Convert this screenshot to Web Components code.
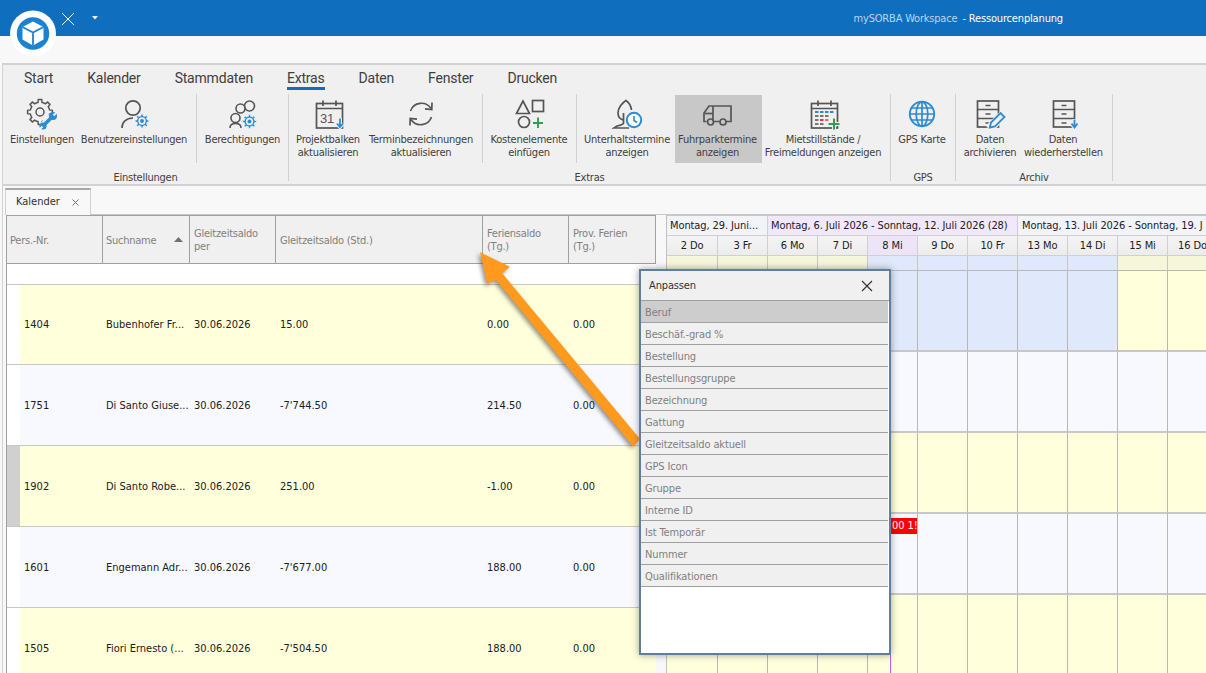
<!DOCTYPE html>
<html lang="de"><head><meta charset="utf-8"><title>mySORBA Workspace - Ressourcenplanung</title>
<style>
html,body{margin:0;height:100%;overflow:hidden;background:#f8f8f8}
body{font-family:"DejaVu Sans",sans-serif;font-stretch:condensed;font-size:11px;color:#303030}
</style></head><body>
<x-app>
  <x-titlebar slot="title"></x-titlebar>
  <x-ribbon>
    <x-ribbon-group label="Einstellungen" w="286" pad="5">
      <x-ribbon-button w="68" icon="gearWrench">Einstellungen</x-ribbon-button>
      <x-ribbon-button w="116" icon="userGear">Benutzereinstellungen</x-ribbon-button>
      <x-ribbon-sep gap="4"></x-ribbon-sep>
      <x-ribbon-button w="91" icon="usersGear">Berechtigungen</x-ribbon-button>
    </x-ribbon-group>
    <x-ribbon-group label="Extras" w="602">
      <x-ribbon-button w="76" icon="cal31" pl="2">Projektbalken<br>aktualisieren</x-ribbon-button>
      <x-ribbon-button w="112" icon="refresh">Terminbezeichnungen<br>aktualisieren</x-ribbon-button>
      <x-ribbon-sep gap="5"></x-ribbon-sep>
      <x-ribbon-button w="90" icon="shapes" pl="2">Kostenelemente<br>einfügen</x-ribbon-button>
      <x-ribbon-sep gap="3"></x-ribbon-sep>
      <x-ribbon-button w="98" icon="tree" pl="2">Unterhaltstermine<br>anzeigen</x-ribbon-button>
      <x-ribbon-button w="87" icon="truck" active pr="2">Fuhrparktermine<br>anzeigen</x-ribbon-button>
      <x-ribbon-button w="122" icon="calPlus">Mietstillstände /<br>Freimeldungen anzeigen</x-ribbon-button>
    </x-ribbon-group>
    <x-ribbon-group label="GPS" w="65">
      <x-ribbon-button w="64" icon="globe" pr="2">GPS Karte</x-ribbon-button>
    </x-ribbon-group>
    <x-ribbon-group label="Archiv" w="157">
      <x-ribbon-button w="68" icon="cabPen">Daten<br>archivieren</x-ribbon-button>
      <x-ribbon-button w="78" icon="cabDown">Daten<br>wiederherstellen</x-ribbon-button>
    </x-ribbon-group>
  </x-ribbon>
  <x-workspace>
    <x-doc-tab>Kalender</x-doc-tab>
    <x-grid-view></x-grid-view>
    <x-scheduler></x-scheduler>
  </x-workspace>
  <x-callout-arrow></x-callout-arrow>
  <x-customize-dialog>
    <x-customize-item active>Beruf</x-customize-item>
    <x-customize-item>Beschäf.-grad %</x-customize-item>
    <x-customize-item>Bestellung</x-customize-item>
    <x-customize-item>Bestellungsgruppe</x-customize-item>
    <x-customize-item>Bezeichnung</x-customize-item>
    <x-customize-item>Gattung</x-customize-item>
    <x-customize-item>Gleitzeitsaldo aktuell</x-customize-item>
    <x-customize-item>GPS Icon</x-customize-item>
    <x-customize-item>Gruppe</x-customize-item>
    <x-customize-item>Interne ID</x-customize-item>
    <x-customize-item>Ist Temporär</x-customize-item>
    <x-customize-item>Nummer</x-customize-item>
    <x-customize-item>Qualifikationen</x-customize-item>
  </x-customize-dialog>
</x-app>
<script>
function gearPath(cx,cy,ro,ri,n){
  let d='';const st=Math.PI*2/n;
  for(let i=0;i<n;i++){const a=i*st-Math.PI/2;
    const p=[[ri,a-st*.5],[ri,a-st*.27],[ro,a-st*.17],[ro,a+st*.17],[ri,a+st*.27]];
    p.forEach((q,j)=>{d+=(i===0&&j===0?'M':'L')+(cx+q[0]*Math.cos(q[1])).toFixed(2)+' '+(cy+q[0]*Math.sin(q[1])).toFixed(2)+' ';});
  }
  return d+'Z';
}
const G='#555',B='#2b8bd3',GR='#2f9e4f',BG='#f0f0f0';
function blueGear(x,y,r){return `<path d="${gearPath(x,y,r,r*.76,8)}" fill="${B}" stroke="${BG}" stroke-width=".8"/><circle cx="${x}" cy="${y}" r="${r*.52}" fill="${BG}"/><circle cx="${x}" cy="${y}" r="${r*.28}" fill="${B}"/>`;}
function calBase(){return `<rect x="4.5" y="5.5" width="26" height="24.5" fill="none" stroke="${G}" stroke-width="1.7"/><path d="M4.5 10.5H30.5M11 2.5V8M24 2.5V8" stroke="${G}" stroke-width="1.7" fill="none"/>`;}
function cabinet(x){return `<rect x="${x}" y="3" width="21" height="26" fill="none" stroke="${G}" stroke-width="1.7"/><path d="M${x} 11.5H${x+21}M${x} 20.5H${x+21}M${x+8} 7.5H${x+13}M${x+8} 16H${x+13}M${x+8} 25H${x+13}" stroke="${G}" stroke-width="1.5" fill="none"/>`;}
const ICONS={
 gearWrench:`<path d="${gearPath(14,14,12.5,9.8,8)}" fill="none" stroke="${G}" stroke-width="1.5"/><circle cx="14" cy="14" r="4" fill="none" stroke="${G}" stroke-width="1.5"/><path d="M17 28L27 18" stroke="${BG}" stroke-width="8"/><path d="M17.5 27.5L26.5 18.5" stroke="${B}" stroke-width="3.6"/><circle cx="27" cy="18" r="4" fill="${B}"/><circle cx="17" cy="28" r="3.6" fill="${B}"/><path d="M27.5 17.5L31 14M16.5 28.5L14 31" stroke="${BG}" stroke-width="2"/>`,
 userGear:`<circle cx="15" cy="10" r="7.2" fill="none" stroke="${G}" stroke-width="1.7"/><path d="M4 30C4 24 8 20.5 15 20" fill="none" stroke="${G}" stroke-width="1.7"/>${blueGear(24,23,7)}`,
 usersGear:`<circle cx="22.5" cy="8" r="5" fill="none" stroke="${G}" stroke-width="1.6"/><circle cx="13.5" cy="10.5" r="4.5" fill="${BG}" stroke="${G}" stroke-width="1.6"/><circle cx="8.5" cy="20" r="4.5" fill="${BG}" stroke="${G}" stroke-width="1.6"/><path d="M3 30C3 27 5 25.5 8.5 25.5C12 25.5 14 27 14 30" fill="none" stroke="${G}" stroke-width="1.6"/>${blueGear(22.5,23.5,7)}`,
 cal31:`${calBase()}<text x="15" y="25" font-family="Liberation Sans" font-size="13" fill="${G}" text-anchor="middle">31</text><path d="M28 20V28.5M25 25.5L28 29L31 25.5" stroke="${BG}" stroke-width="4" fill="none"/><path d="M28 20.5V28.5M25 25.5L28 29L31 25.5" stroke="${B}" stroke-width="1.8" fill="none"/>`,
 refresh:`<path d="M5.5 13A11.5 11.5 0 0 1 26 10.5M26.5 19A11.5 11.5 0 0 1 6 21.5" fill="none" stroke="${G}" stroke-width="1.7"/><path d="M27 4.5L26.8 11.5L20 10.8M5 27.5L5.2 20.5L12 21.2" fill="none" stroke="${G}" stroke-width="1.7"/>`,
 shapes:`<path d="M10 3L3.5 15.5H16.5Z" fill="none" stroke="${G}" stroke-width="1.7"/><rect x="19.5" y="2.5" width="11" height="11" fill="none" stroke="${G}" stroke-width="1.7"/><circle cx="11" cy="24" r="5.5" fill="none" stroke="${G}" stroke-width="1.7"/><path d="M25 19.5V30M20 25H30" stroke="${GR}" stroke-width="1.9"/>`,
 tree:`<path d="M12 22C9 21 7 19 7 15C7 10 11 5 15 2.5C18 4.5 20 8 20.5 12" fill="none" stroke="${G}" stroke-width="1.7"/><path d="M12.5 15V25C12.5 27 9 27 6 28L3 30H18" fill="none" stroke="${G}" stroke-width="1.7"/><circle cx="23" cy="22" r="7.2" fill="#fff" stroke="${B}" stroke-width="2"/><path d="M23 18V22.5L26 24.5" fill="none" stroke="${B}" stroke-width="1.6"/>`,
 truck:`<path d="M11 8H29V23.5H24M17.5 23.5H12M4.5 23.5H2V15L7 8H11V23" fill="none" stroke="${G}" stroke-width="1.7"/><path d="M2.5 15.5H11" stroke="${G}" stroke-width="1.7"/><circle cx="8.5" cy="24" r="3" fill="none" stroke="${G}" stroke-width="1.7"/><circle cx="21" cy="24" r="3" fill="none" stroke="${G}" stroke-width="1.7"/>`,
 calPlus:`${calBase()}<g fill="${B}"><rect x="8" y="13" width="3.5" height="2"/><rect x="13" y="13" width="3.5" height="2"/><rect x="18" y="13" width="3.5" height="2"/><rect x="23" y="13" width="3.5" height="2"/></g><g fill="#777"><rect x="8" y="17" width="3.5" height="2"/><rect x="13" y="17" width="3.5" height="2"/><rect x="18" y="17" width="3.5" height="2"/><rect x="8" y="21" width="3.5" height="2"/><rect x="8" y="25" width="3.5" height="2"/><rect x="13" y="25" width="3.5" height="2"/></g><rect x="13" y="21" width="3.5" height="2" fill="#e53935"/><rect x="18" y="21" width="3.5" height="2" fill="#e57373"/><path d="M27 20V32M21 26H33" stroke="${BG}" stroke-width="4"/><path d="M27 20.5V31.5M21.5 26H32.5" stroke="${GR}" stroke-width="2"/>`,
 globe:`<circle cx="16" cy="16" r="12.2" fill="none" stroke="${B}" stroke-width="1.9"/><ellipse cx="16" cy="16" rx="5.8" ry="12.2" fill="none" stroke="${B}" stroke-width="1.7"/><path d="M16 4V28M4 16H28M5.5 10H26.5M5.5 22H26.5" stroke="${B}" stroke-width="1.7"/>`,
 cabPen:`${cabinet(3.5)}<path d="M15 31L30 16" stroke="${BG}" stroke-width="9"/><path d="M15.8 29.5L17 24.5L26.5 15L30.5 19L21 28.5Z" fill="${BG}" stroke="${B}" stroke-width="1.8"/>`,
 cabDown:`${cabinet(6.5)}<path d="M27.5 21V29M24.5 25.5L27.5 29.5L30.5 25.5" stroke="${BG}" stroke-width="4" fill="none"/><path d="M27.5 21.5V29M24.5 25.5L27.5 29.5L30.5 25.5" stroke="${B}" stroke-width="1.8" fill="none"/>`
};
function def(name,css,html,setup){
  customElements.define(name,class extends HTMLElement{
    connectedCallback(){
      if(this.shadowRoot)return;
      const r=this.attachShadow({mode:'open'});
      const h=typeof html==='function'?html(this):html;
      r.innerHTML=`<style>${typeof css==='function'?css(this):css}</style>${h}`;
      if(setup)setup(this,r);
    }
  });
}
def('x-app',`:host{display:flex;flex-direction:column;position:relative;width:1206px;height:673px;overflow:hidden}`,`<slot name="title"></slot><slot></slot>`);

def('x-titlebar',`:host{display:flex;flex:none;align-items:center;justify-content:flex-end;height:36px;background:#106ebe;color:#fff;padding-right:143px;box-sizing:border-box;position:relative;margin-bottom:27px;letter-spacing:-.16px}
.t{color:#b9d5f0;margin-right:5px;letter-spacing:-.2px}
.logo{position:absolute;left:10px;top:10px;width:46px;height:46px}
.x{position:absolute;left:61px;top:12px}.d{position:absolute;left:92px;top:16px}`,
`<svg class="logo" viewBox="0 0 46 46"><circle cx="23" cy="23.5" r="23" fill="#fff"/><circle cx="23" cy="23.5" r="16.2" fill="#1b82d0"/><path d="M23 11.5L33.5 17V29.5L23 35.5L12.5 29.5V17Z" fill="#fff"/><path d="M12.5 17L23 22.5L33.5 17M23 22.5V35.5" fill="none" stroke="#1b82d0" stroke-width="1.8"/></svg>
<svg class="x" width="14" height="14" viewBox="0 0 14 14"><path d="M1 1L13 13M13 1L1 13" stroke="#fff" stroke-width="1"/></svg>
<svg class="d" width="6" height="4" viewBox="0 0 6 4"><path d="M0 0H6L3 3.5Z" fill="#fff"/></svg>
<span class="t">mySORBA Workspace</span><span>- Ressourcenplanung</span>`);

def('x-ribbon',`:host{display:flex;flex-direction:column;flex:none;height:123px;margin-left:2px;box-sizing:border-box;border:solid #d2d2d2;border-width:2px 0 2px 1px;background:#f0f0f0}
.tabs{display:flex;gap:34px;height:29px;padding:0 0 0 21px;flex:none;font:14px Roboto,sans-serif;letter-spacing:-.2px;color:#404040;font-stretch:normal}
.tabs span{height:22px;line-height:26px;box-sizing:content-box}
.on{border-bottom:3px solid #106ebe}
.g{display:flex;height:87px}`,
`<div class="tabs"><span>Start</span><span>Kalender</span><span>Stammdaten</span><span class="on">Extras</span><span>Daten</span><span>Fenster</span><span>Drucken</span></div><div class="g"><slot></slot></div>`);

def('x-ribbon-group',t=>`:host{display:flex;flex-direction:column;flex:none;box-sizing:border-box;width:${t.getAttribute('w')}px;height:87px;border-right:1px solid #d0d0d0}
.b{display:flex;height:69px;padding-left:${t.getAttribute('pad')||0}px}
.l{text-align:center;line-height:13px;padding-top:8px;color:#404040;letter-spacing:-.24px}`,
t=>`<div class="b"><slot></slot></div><div class="l">${t.getAttribute('label')}</div>`);

def('x-ribbon-sep',t=>`:host{display:block;flex:none;width:1px;height:69px;background:#d0d0d0;margin-left:${t.getAttribute('gap')}px}`,``);

def('x-ribbon-button',t=>`:host{display:block;flex:none;box-sizing:border-box;width:${t.getAttribute('w')}px;height:69px;padding:4px ${t.getAttribute('pr')||0}px 0 ${t.getAttribute('pl')||0}px;text-align:center;color:#404040;line-height:13px;white-space:nowrap;letter-spacing:-.24px;${t.hasAttribute('active')?'background:linear-gradient(#f0f0f0 1px,#c8c8c8 1px);':''}}
svg{display:block;margin:0 auto 3px;overflow:visible}`,
t=>`<svg width="32" height="32" viewBox="0 0 32 32">${ICONS[t.getAttribute('icon')].replace(new RegExp(BG,'g'),t.hasAttribute('active')?'#c8c8c8':BG)}</svg><slot></slot>`);

def('x-workspace',`:host{display:grid;flex:1;min-height:0;grid-template-columns:650px 1fr;grid-template-rows:29px 1fr;margin-left:2px;border-left:1px solid #d2d2d2;padding-left:3px;column-gap:10px;background:#f8f8f8}
::slotted(x-doc-tab){grid-column:1 / 3}`,`<slot></slot>`);

def('x-doc-tab',`:host{display:flex;height:29px;box-sizing:border-box;border-bottom:1px solid #c8c8c8;padding-top:2px;color:#303030}
.t{display:flex;align-items:center;box-sizing:border-box;width:86px;height:27px;margin-left:-1px;padding:0 0 2px 10px;background:#f8f8f8;border:1px solid #d0d0d0;border-top:2px solid #a8a8a8;border-bottom:none}
.c{margin-left:auto;margin-right:11px;margin-top:2px}
svg{display:block}`,
`<div class="t"><slot></slot><svg class="c" width="7" height="7" viewBox="0 0 7 7"><path d="M.5 .5L6.5 6.5M6.5 .5L.5 6.5" stroke="#707070" stroke-width="1"/></svg></div>`);

const COLS='96px 87px 86px 207px 86px 87px';
const DATA=[
['1404','Bubenhofer Fr...','30.06.2026','15.00','0.00','0.00'],
['1751','Di Santo Giuse...','30.06.2026','-7\'744.50','214.50','0.00'],
['1902','Di Santo Robe...','30.06.2026','251.00','-1.00','0.00'],
['1601','Engemann Adr...','30.06.2026','-7\'677.00','188.00','0.00'],
['1505','Fiori Ernesto (...','30.06.2026','-7\'504.50','188.00','0.00']];
def('x-grid-view',`:host{display:block;box-sizing:border-box;width:650px;border-left:1px solid #a0a0a0;background:#fff;overflow:hidden}
.h{display:grid;grid-template-columns:${COLS};height:49px;box-sizing:border-box;border-top:1px solid #a0a0a0;border-bottom:1px solid #a0a0a0;background:#f0f0f0;color:#808080;line-height:13px;letter-spacing:-.25px}
.h div{display:flex;align-items:center;position:relative;padding:0 3px 0 4px;border-right:1px solid #a0a0a0}
.h div.o{padding-top:2px;box-sizing:border-box}
.h div:nth-child(-n+2){padding-left:3px}
.h svg{position:absolute;left:71px;top:21px}
.f{height:20px;border-bottom:1px solid #c8c8c8;box-sizing:content-box}
.r{display:grid;grid-template-columns:13px 83px 87px 86px 207px 86px 87px;height:81px;box-sizing:border-box;border-bottom:1px solid #c8c8c8;line-height:13px;color:#202020}
.r:nth-of-type(3){height:80px}
.r>div{display:flex;align-items:center;padding-left:4px;white-space:nowrap;overflow:hidden}
.r>div:first-child{padding:0;background:#fff}
.r>div:nth-child(3){padding-left:3px}
.y{background:#ffffdc}.p{background:#f8f9ff}
.r.sel>div:first-child{background:#d0d0d0}`,
`<div class="h"><div class="o">Pers.-Nr.</div><div class="o">Suchname<svg width="9" height="5" viewBox="0 0 9 5"><path d="M0 5L4.5 0L9 5Z" fill="#707070"/></svg></div><div>Gleitzeitsaldo<br>per</div><div class="o">Gleitzeitsaldo (Std.)</div><div>Feriensaldo<br>(Tg.)</div><div>Prov. Ferien<br>(Tg.)</div></div><div class="f"></div>`+
DATA.map((d,i)=>`<div class="r ${i%2?'p':'y'} ${i===2?'sel':''}"><div></div>${d.map(v=>`<div>${v}</div>`).join('')}</div>`).join(''));

const DAYS=['2 Do','3 Fr','6 Mo','7 Di','8 Mi','9 Do','10 Fr','13 Mo','14 Di','15 Mi','16 Do'];
const SCOLS='51px repeat(10,50px)';
def('x-scheduler',`:host{display:block;position:relative;overflow:hidden;box-sizing:border-box;border-top:1px solid #c8c8c8;border-left:1px solid #c0c0c0;background:#fff;line-height:13px;color:#202020;letter-spacing:-.1px}
.g{display:grid;grid-template-columns:${SCOLS};width:551px}
.w{height:20px;box-sizing:border-box;border-right:1px solid #d0d0d0;border-bottom:1px solid #d0d0d0;padding:3px 0 0 3px;background:#f3f3fa;white-space:nowrap;overflow:hidden}
.w.c{background:#f1e9fb}
.w.n{padding-left:4px}
.d{height:20px;box-sizing:border-box;border-right:1px solid #d0d0d0;border-bottom:1px solid #d0d0d0;padding-top:3px;text-align:center;background:linear-gradient(#f4f4f4,#ececec)}
.d.c{background:#eee4f8}
.a{height:15px;box-sizing:border-box;border-right:1px solid #c8c8c0;border-bottom:1px solid #b8b8b8;background:#f6f6da}
.a.b{background:#e0e8fb}
.c2{height:81px;box-sizing:border-box;border-right:1px solid #b8b8b0;border-bottom:2px solid #c8c8c8}
.y{background:#ffffdc}.p{background:#f8f9ff}.b{background:#e0e8fb}
.now{position:absolute;left:223px;top:55px;bottom:0;width:1px;background:#c060e8}
.ev{position:absolute;left:224px;top:302px;width:26px;height:16px;background:#f00;color:#fff;overflow:hidden;white-space:nowrap;line-height:16px;padding-left:1px;box-sizing:border-box}`,
()=>{
 let h='<div class="g"><div class="w" style="grid-column:span 2">Montag, 29. Juni...</div><div class="w c" style="grid-column:span 5">Montag, 6. Juli 2026 - Sonntag, 12. Juli 2026 (28)</div><div class="w n" style="grid-column:span 4">Montag, 13. Juli 2026 - Sonntag, 19. J</div>';
 DAYS.forEach((d,i)=>h+=`<div class="d ${i===4?'c':''}">${d}</div>`);
 DAYS.forEach((d,i)=>h+=`<div class="a ${i>=4&&i<=8?'b':''}"></div>`);
 for(let r=0;r<5;r++)DAYS.forEach((d,i)=>{const c=r===0?(i>=4&&i<=8?'b':'y'):(r%2?'p':'y');h+=`<div class="c2 ${c}"></div>`;});
 return h+'</div><div class="now"></div><div class="ev">00 1!</div>';
});

def('x-callout-arrow',`:host{display:block;position:absolute;left:0;top:0;width:1206px;height:673px;pointer-events:none}
svg{position:absolute;left:0;top:0;filter:drop-shadow(-2px 2px 2px rgba(60,60,60,.55))}`,
`<svg width="1206" height="673" viewBox="0 0 1206 673"><polygon points="480,252.3 510,266.7 502.3,273.3 640,439 633.3,446.7 496,280 487.3,284" fill="#ff9a1e"/></svg>`);

def('x-customize-dialog',`:host{display:flex;flex-direction:column;position:absolute;left:639px;top:269px;width:252px;height:386px;box-sizing:border-box;border:2px solid #5f7f9f;background:#fff;box-shadow:0 0 7px rgba(40,40,40,.45);color:#303030;letter-spacing:-.14px}
.t{display:flex;align-items:center;justify-content:space-between;flex:none;height:30px;box-sizing:border-box;padding:0 16px 0 8px;background:#f0f0f0;border-bottom:1px solid #a0a0a0}
.l{display:flex;flex-direction:column;padding-right:1px}`,
`<div class="t"><span>Anpassen</span><svg width="12" height="12" viewBox="0 0 12 12"><path d="M1 1L11 11M11 1L1 11" stroke="#303030" stroke-width="1.1"/></svg></div><div class="l"><slot></slot></div>`);

def('x-customize-item',t=>`:host{display:block;height:22px;box-sizing:border-box;border-bottom:1px solid #a0a0a0;padding:1px 0 0 4px;line-height:21px;color:#808080;background:${t.hasAttribute('active')?'#cdcdcd':'#f0f0f0'}}`,`<slot></slot>`);
</script>
</body></html>
